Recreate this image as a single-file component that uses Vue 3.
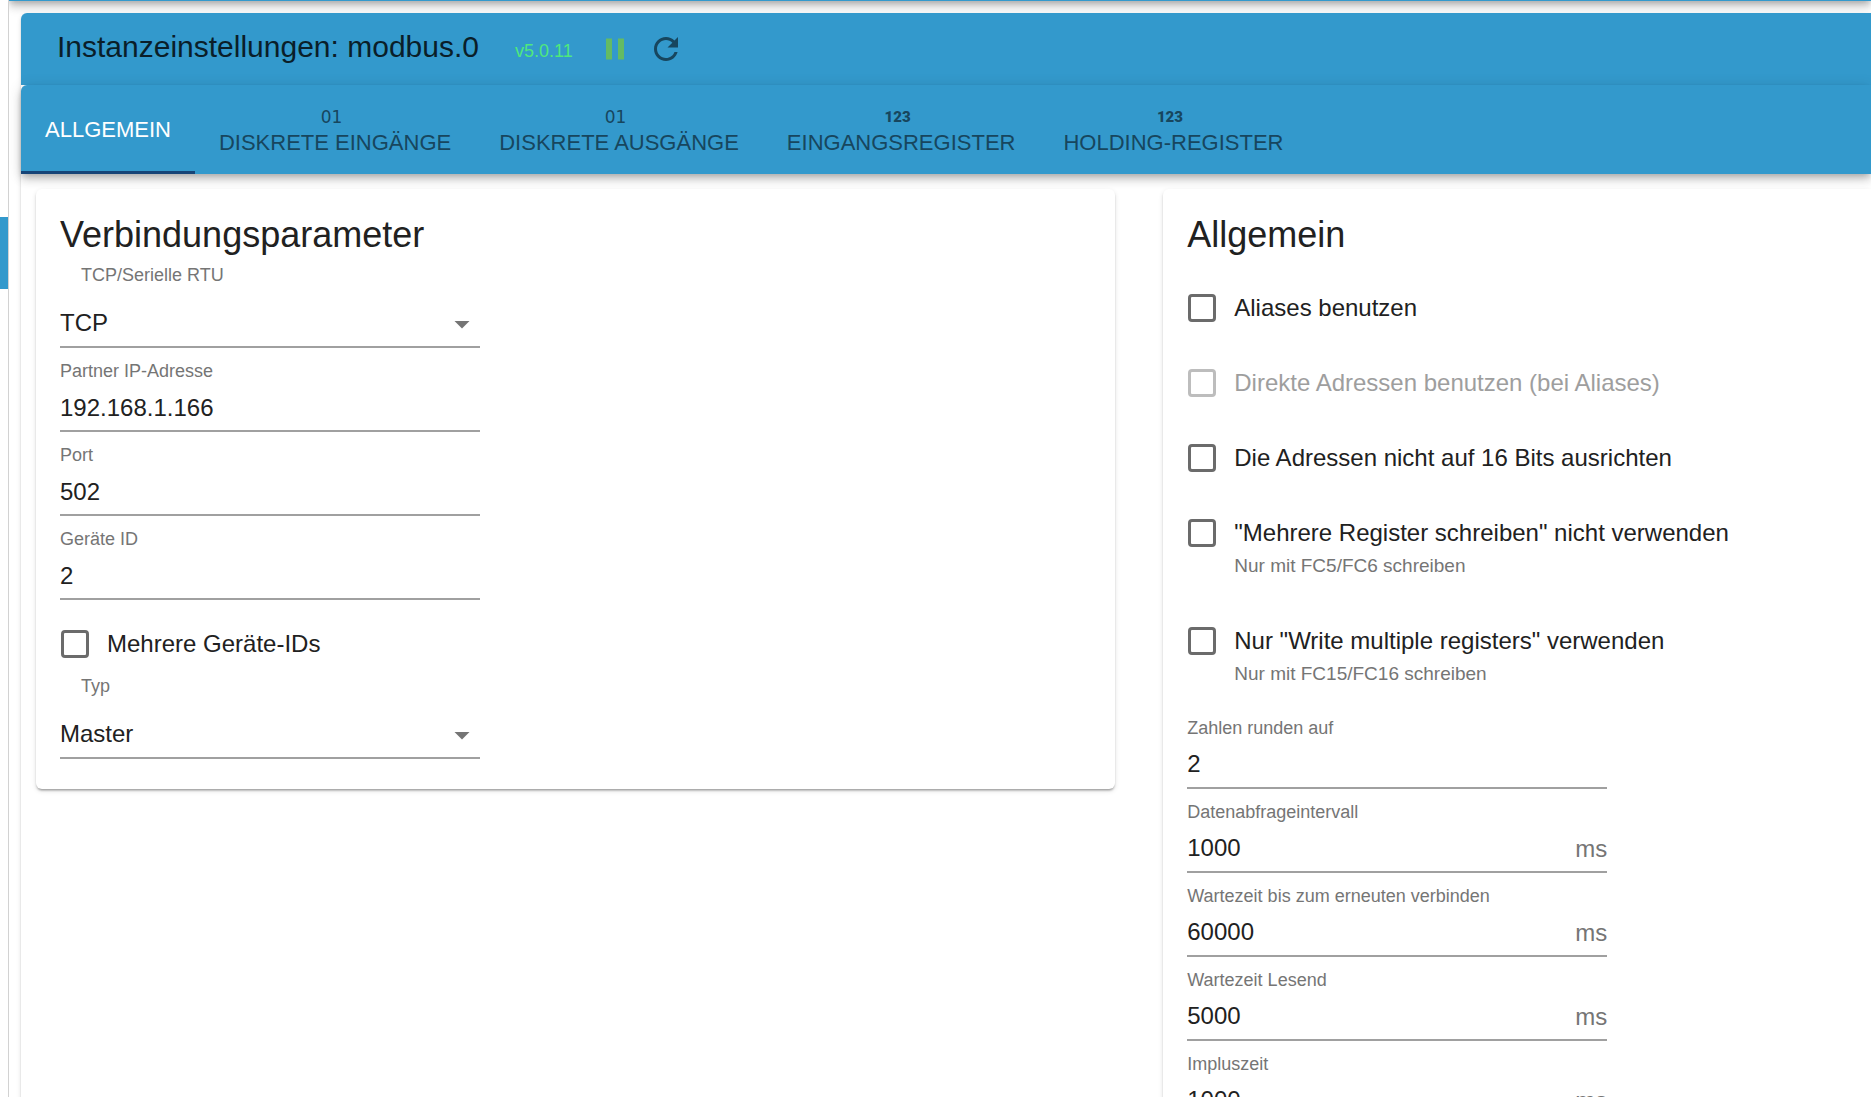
<script setup>
import { ref, reactive } from 'vue'

const tabs = [
  { id: 'general', label: 'Allgemein' },
  { id: 'disInputs', label: 'Diskrete Eingänge', badge: '01', kind: 'binary' },
  { id: 'coils', label: 'Diskrete Ausgänge', badge: '01', kind: 'binary' },
  { id: 'inputRegs', label: 'Eingangsregister', badge: '123', kind: 'numeric' },
  { id: 'holdingRegs', label: 'Holding-Register', badge: '123', kind: 'numeric' },
]
const activeTab = ref('general')

const connection = reactive({ transport: 'TCP', type: 'Master', multiDevice: false })

const connectionFields = reactive([
  { id: 'bind', label: 'Partner IP-Adresse', value: '192.168.1.166' },
  { id: 'port', label: 'Port', value: '502' },
  { id: 'deviceId', label: 'Geräte ID', value: '2' },
])

const options = reactive([
  { id: 'showAliases', label: 'Aliases benutzen', value: false },
  { id: 'directAddresses', label: 'Direkte Adressen benutzen (bei Aliases)', value: false, disabled: true },
  { id: 'doNotRoundAddress', label: 'Die Adressen nicht auf 16 Bits ausrichten', value: false },
  { id: 'doNotUseWriteMultiple', label: '"Mehrere Register schreiben" nicht verwenden', value: false, help: 'Nur mit FC5/FC6 schreiben' },
  { id: 'onlyUseWriteMultiple', label: 'Nur "Write multiple registers" verwenden', value: false, help: 'Nur mit FC15/FC16 schreiben' },
])

const generalFields = reactive([
  { id: 'round', label: 'Zahlen runden auf', value: '2' },
  { id: 'poll', label: 'Datenabfrageintervall', value: '1000', unit: 'ms' },
  { id: 'recon', label: 'Wartezeit bis zum erneuten verbinden', value: '60000', unit: 'ms' },
  { id: 'timeout', label: 'Wartezeit Lesend', value: '5000', unit: 'ms' },
  { id: 'pulseTime', label: 'Impluszeit', value: '1000', unit: 'ms' },
])
</script>

<template>
  <div class="page">
    <aside class="sidebar"><div class="selected"></div></aside>
    <div class="content">
      <div class="appbar"></div>
      <section class="panel">
        <header class="header">
          <h1>Instanzeinstellungen: modbus.0</h1>
          <span class="version">v5.0.11</span>
          <button class="icon-btn pause" type="button" aria-label="Pause">
            <svg viewBox="0 0 24 24"><path d="M6 19h4V5H6v14zm8-14v14h4V5h-4z" /></svg>
          </button>
          <button class="icon-btn" type="button" aria-label="Neu laden">
            <svg viewBox="0 0 24 24"><path d="M17.65 6.35C16.2 4.9 14.21 4 12 4c-4.42 0-7.99 3.58-7.99 8s3.57 8 7.99 8c3.73 0 6.84-2.55 7.73-6h-2.08c-.82 2.33-3.04 4-5.65 4-3.31 0-6-2.69-6-6s2.69-6 6-6c1.66 0 3.14.69 4.22 1.78L13 11h7V4l-2.35 2.35z" /></svg>
          </button>
        </header>

        <nav class="tabs" role="tablist">
          <button
            v-for="tab in tabs"
            :key="tab.id"
            class="tab"
            :class="{ active: tab.id === activeTab }"
            type="button"
            role="tab"
            :aria-selected="tab.id === activeTab"
            @click="activeTab = tab.id"
          >
            <span v-if="tab.badge" class="badge" :class="tab.kind">{{ tab.badge }}</span>
            <span>{{ tab.label }}</span>
          </button>
        </nav>

        <main class="cards">
          <form class="card" @submit.prevent>
            <h2>Verbindungsparameter</h2>
            <div class="field select-field">
              <label for="transport">TCP/Serielle RTU</label>
              <div class="select-box">
                <select id="transport" v-model="connection.transport">
                  <option>TCP</option>
                </select>
                <svg class="arrow" viewBox="0 0 24 24"><path d="M7 10l5 5 5-5z" /></svg>
              </div>
            </div>
            <div v-for="f in connectionFields" :key="f.id" class="field">
              <label :for="f.id">{{ f.label }}</label>
              <div class="input-box"><input :id="f.id" v-model="f.value" type="text" /></div>
            </div>
            <div class="check compact">
              <label><input v-model="connection.multiDevice" type="checkbox" />Mehrere Geräte-IDs</label>
            </div>
            <div class="field select-field">
              <label for="type">Typ</label>
              <div class="select-box">
                <select id="type" v-model="connection.type">
                  <option>Master</option>
                </select>
                <svg class="arrow" viewBox="0 0 24 24"><path d="M7 10l5 5 5-5z" /></svg>
              </div>
            </div>
          </form>

          <form class="card last" @submit.prevent>
            <h2>Allgemein</h2>
            <div class="options">
              <div v-for="o in options" :key="o.id" class="check" :class="{ disabled: o.disabled }">
                <label><input v-model="o.value" type="checkbox" :disabled="o.disabled" />{{ o.label }}</label>
                <p v-if="o.help">{{ o.help }}</p>
              </div>
            </div>
            <div v-for="f in generalFields" :key="f.id" class="field number-field">
              <label :for="f.id">{{ f.label }}</label>
              <div class="input-box">
                <input :id="f.id" v-model="f.value" type="text" />
                <span v-if="f.unit" class="unit">{{ f.unit }}</span>
              </div>
            </div>
          </form>
        </main>
      </section>
    </div>
  </div>
</template>

<style>
body {
  overflow: hidden;
  background: #fff;
}
</style>

<style scoped>
.page {
  display: flex;
  height: 100vh;
  overflow: hidden;
  font-family: "Liberation Sans", Arial, sans-serif;
  font-size: 24px;
  line-height: 36px;
  color: #212121;
}
.page * {
  box-sizing: border-box;
}
.sidebar {
  flex: none;
  width: 9px;
  padding-top: 217px;
  border-right: 1px solid #d2d2d2;
}
.selected {
  height: 72px;
  background: #3399cc;
}
.content {
  flex: 1;
  min-width: 0;
  display: flex;
  flex-direction: column;
  overflow: hidden;
}
/* only the lower edge of the app bar stays in view */
.appbar {
  flex: none;
  height: 72px;
  margin-top: -71px;
  background: #3399cc;
  box-shadow: 0 3px 6px -2px rgba(0, 0, 0, 0.2), 0 6px 8px rgba(0, 0, 0, 0.14), 0 2px 15px rgba(0, 0, 0, 0.12);
}
.panel {
  flex: 1;
  margin: 12px 0 0 12px;
  border-radius: 6px 0 0 0;
  box-shadow: 0 3px 2px -2px rgba(0, 0, 0, 0.2), 0 2px 2px rgba(0, 0, 0, 0.14), 0 2px 5px rgba(0, 0, 0, 0.12);
}
.header {
  display: flex;
  align-items: center;
  height: 72px;
  padding-left: 36px;
  background: #3399cc;
  border-radius: 6px 0 0 0;
}
h1 {
  margin: 0 36px 4px 0;
  font-size: 30px;
  line-height: 40px;
  font-weight: 400;
  color: #0a1e29;
}
.version {
  margin: 4px 24px 0 0;
  font-size: 18px;
  line-height: 24px;
  color: #4fe87c;
}
.icon-btn {
  width: 36px;
  height: 36px;
  margin-right: 15px;
  padding: 0;
  border: 0;
  background: none;
  color: #17465e;
}
.icon-btn svg {
  display: block;
  width: 100%;
  fill: currentColor;
}
.pause {
  color: #64bb63;
}
.tabs {
  display: flex;
  position: relative;
  height: 89px;
  background: #3399cc;
  border-radius: 6px 0 0 0;
  box-shadow: 0 3px 6px -2px rgba(0, 0, 0, 0.2), 0 6px 8px rgba(0, 0, 0, 0.14), 0 2px 15px rgba(0, 0, 0, 0.12);
}
.tab {
  display: flex;
  flex-direction: column;
  align-items: center;
  justify-content: center;
  padding: 3px 24px 0;
  border: 0;
  border-bottom: 3px solid transparent;
  background: none;
  font-family: inherit;
  font-size: 22px;
  line-height: 26px;
  text-transform: uppercase;
  color: #17465e;
}
.tab.active {
  border-bottom-color: #164477;
  color: #fff;
}
.badge {
  margin-right: 7px;
  line-height: 26px;
}
.binary {
  font-family: "DejaVu Sans", sans-serif;
  font-size: 17px;
}
.numeric {
  font-family: Roboto, sans-serif;
  font-size: 15px;
  font-weight: 900;
}
.cards {
  display: grid;
  grid-template-columns: 61fr 40fr;
  align-items: start;
  gap: 48px;
  padding: 15px 0 0 15px;
}
.card {
  position: relative;
  padding: 24px 24px 30px;
  background: #fff;
  border-radius: 6px;
  box-shadow: 0 3px 2px -2px rgba(0, 0, 0, 0.2), 0 2px 2px rgba(0, 0, 0, 0.14), 0 2px 5px rgba(0, 0, 0, 0.12);
}
.card.last {
  border-radius: 6px 0 0 0;
}
h2 {
  margin: 0;
  font-size: 36px;
  line-height: 44px;
  font-weight: 400;
}
.field {
  display: flex;
  flex-direction: column;
  gap: 7px;
  width: 420px;
  max-width: 100%;
  padding-top: 11px;
}
.field label {
  font-size: 18px;
  line-height: 24px;
  color: #757575;
}
.select-field {
  gap: 18px;
  padding-top: 6px;
}
.select-field label {
  padding-left: 21px;
}
.number-field {
  gap: 6px;
}
.input-box,
.select-box {
  position: relative;
  display: flex;
  align-items: center;
  padding-bottom: 4px;
  border-bottom: 2px solid #a0a0a0;
}
.select-box,
.number-field .input-box {
  padding-bottom: 5px;
}
input[type="text"],
select {
  flex: 1;
  min-width: 0;
  height: 36px;
  margin: 0;
  padding: 0;
  border: 0;
  outline: 0;
  appearance: none;
  background: none;
  font: inherit;
  color: inherit;
}
.arrow {
  position: absolute;
  top: 1px;
  right: 0;
  width: 36px;
  height: 36px;
  fill: #757575;
  pointer-events: none;
}
.unit {
  padding-top: 2px;
  line-height: 34px;
  color: #757575;
}
.options {
  padding-bottom: 7px;
}
.check {
  padding: 33px 0 6px;
}
.check.compact {
  padding-top: 26px;
}
.check label {
  display: flex;
  align-items: center;
  gap: 18px;
  padding-left: 1px;
}
.check p {
  margin: 3px 0 0;
  padding: 0 0 6px 47px;
  font-size: 19px;
  line-height: 24px;
  color: #757575;
}
input[type="checkbox"] {
  flex: none;
  appearance: none;
  width: 28px;
  height: 28px;
  margin: 0;
  border: 3px solid #6b6b6b;
  border-radius: 4px;
}
.disabled label {
  color: #9e9e9e;
}
.disabled input[type="checkbox"] {
  border-color: #bdbdbd;
}
</style>
